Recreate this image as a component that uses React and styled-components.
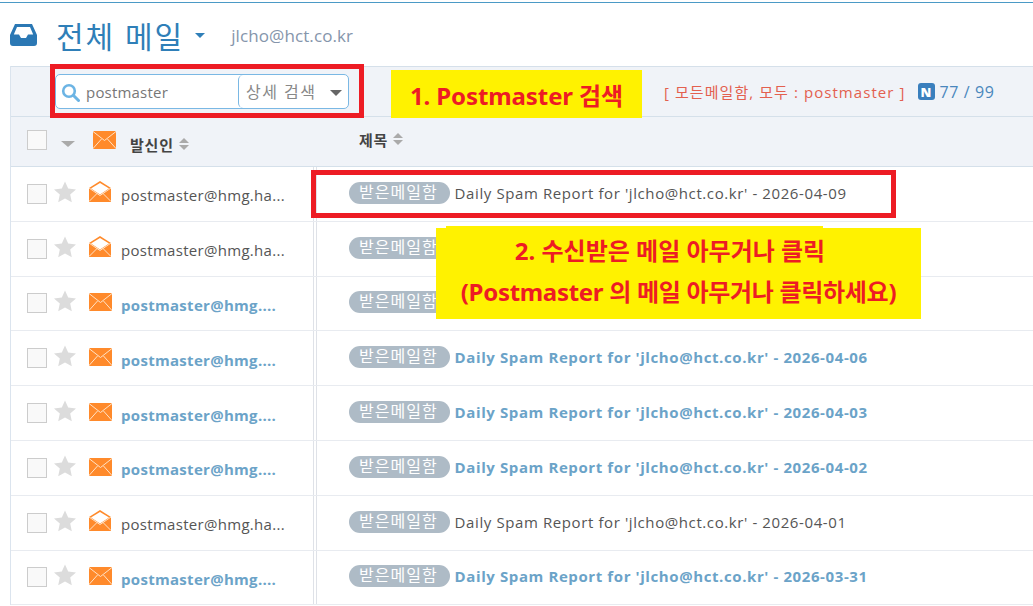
import React from 'react';
import styled, { createGlobalStyle } from 'styled-components';

const GlobalStyle = createGlobalStyle`
  html, body {
    margin: 0;
    padding: 0;
    background: #fff;
    overflow: hidden;
  }
  body {
    font-family: 'Open Sans', 'Noto Sans CJK KR', sans-serif;
  }
`;

const Page = styled.div`
  position: relative;
  width: 1033px;
  height: 606px;
  overflow: hidden;
  border-top: 1px solid #4b9ac6;
  margin-top: 2px;
  box-sizing: border-box;
`;

const TitleBar = styled.div`
  display: flex;
  align-items: center;
  height: 63px;
  padding-left: 10px;
  box-sizing: border-box;
`;

const Title = styled.h1`
  margin: 0 0 0 19px;
  font-size: 30px;
  font-weight: 400;
  letter-spacing: 2px;
  color: #2f7fb8;
`;

const TitleCaret = styled.span`
  width: 0;
  height: 0;
  margin: 1px 0 0 11px;
  border-left: 5px solid transparent;
  border-right: 5px solid transparent;
  border-top: 5px solid #2f7fb8;
`;

const Account = styled.span`
  margin: 2px 0 0 26px;
  font-size: 17px;
  letter-spacing: 0.1px;
  color: #8595ab;
`;

const Panel = styled.div`
  margin-left: 10px;
  border-left: 1px solid #dbe4ee;
`;

const Toolbar = styled.div`
  display: flex;
  align-items: center;
  height: 51px;
  padding-left: 44px;
  background: #f0f3f8;
  border-top: 1px solid #d5e0ea;
  border-bottom: 1px solid #d5e0ea;
  box-sizing: border-box;
`;

const SearchBox = styled.div`
  display: flex;
  align-items: center;
  width: 294px;
  height: 35px;
  background: #fff;
  border: 1px solid #7ab8e4;
  border-radius: 5px;
  box-sizing: border-box;
`;

const SearchInput = styled.div`
  display: flex;
  align-items: center;
  gap: 6px;
  width: 182px;
  padding: 1px 0 0 5px;
  box-sizing: border-box;
  font-size: 15px;
  letter-spacing: 0.2px;
  color: #777;
`;

const SearchMode = styled.div`
  display: flex;
  align-items: center;
  justify-content: space-between;
  flex: 1;
  align-self: stretch;
  padding: 0 6px 2px 7px;
  border-left: 1px solid #7ab8e4;
  border-radius: 5px;
  font-size: 16px;
  letter-spacing: 1.5px;
  color: #888;
`;

const ModeCaret = styled.span`
  width: 0;
  height: 0;
  margin-top: 4px;
  border-left: 6px solid transparent;
  border-right: 6px solid transparent;
  border-top: 6px solid #666;
`;

const SearchSummary = styled.div`
  margin-left: 315px;
  font-size: 15px;
  letter-spacing: 1.07px;
  color: #e3604f;
  white-space: nowrap;
`;

const Count = styled.div`
  display: flex;
  align-items: center;
  gap: 5px;
  margin-left: 12px;
  font-size: 16px;
  letter-spacing: 0.6px;
  color: #4a87bd;
  white-space: nowrap;
`;

const NaverBadge = styled.span`
  display: inline-flex;
  align-items: center;
  justify-content: center;
  width: 17px;
  height: 17px;
  border-radius: 3px;
  background: #3a7fbd;
  color: #fff;
  font-size: 13px;
  font-weight: 800;
  letter-spacing: 0;
`;

const HeaderRow = styled.div`
  display: flex;
  align-items: center;
  height: 50px;
  background: #f0f3f8;
  border-bottom: 1px solid #d5e0ea;
  box-sizing: border-box;
`;

const Check = styled.span`
  flex: none;
  width: 20px;
  height: 20px;
  margin: ${p => (p.$head ? '-4px' : '0')} 0 0 16px;
  background: #f9f9f9;
  border: 1px solid #ccc;
  box-sizing: border-box;
`;

const HeaderCaret = styled.span`
  width: 0;
  height: 0;
  margin: 4px 0 0 14px;
  border-left: 7px solid transparent;
  border-right: 7px solid transparent;
  border-top: 6px solid #aaa;
`;

const HeaderMail = styled.span`
  display: flex;
  margin: -4px 0 0 18px;
`;

const SenderHead = styled.span`
  display: flex;
  align-items: center;
  gap: 5px;
  width: 229px;
  margin: 5px 0 0 14px;
  font-size: 15px;
  font-weight: 700;
  letter-spacing: 0.8px;
  color: #444;
`;

const SubjectHead = styled(SenderHead)`
  width: auto;
  margin: -5px 0 0 0;
`;

const SortIcon = styled.span`
  display: inline-flex;
  flex-direction: column;
  gap: 2px;

  &::before,
  &::after {
    content: '';
    width: 0;
    height: 0;
    border-left: 5px solid transparent;
    border-right: 5px solid transparent;
  }
  &::before {
    border-bottom: 5px solid #aaa;
  }
  &::after {
    border-top: 5px solid #aaa;
  }
`;

const Row = styled.div`
  display: flex;
  height: 54.8px;
  border-bottom: 1px solid #e8ebf0;
  box-sizing: border-box;
`;

const SenderCell = styled.div`
  display: flex;
  align-items: center;
  flex: none;
  width: 303px;
  border-right: 1px solid #dfe2e8;
  box-sizing: border-box;
`;

const Star = styled.svg`
  flex: none;
  width: 24px;
  height: 24px;
  margin: -4px 0 0 6px;
  fill: #dcdcdc;
`;

const MailIcon = styled.span`
  display: flex;
  flex: none;
  margin: ${p => (p.$unread ? '-2px' : '-4px')} 0 0 12px;
`;

const Sender = styled.span`
  margin: 3px 0 0 ${p => (p.$unread ? '9px' : '10px')};
  font-size: 15px;
  font-weight: ${p => (p.$unread ? 700 : 400)};
  letter-spacing: 0.3px;
  color: ${p => (p.$unread ? '#6ba3c8' : '#555')};
  white-space: nowrap;
`;

const SubjectCell = styled.div`
  display: flex;
  align-items: center;
  flex: 1;
  margin-left: 2px;
  padding-left: 32px;
  border-left: 1px solid #dfe2e8;
`;

const Tag = styled.span`
  flex: none;
  padding: 0 12px 0 10px;
  height: 22px;
  line-height: 21px;
  margin-top: -2px;
  border-radius: 11px;
  background: #aebbc6;
  color: #fff;
  font-size: 16px;
  letter-spacing: 1px;
`;

const Subject = styled.span`
  margin: -2px 0 0 5px;
  font-size: 15px;
  font-weight: ${p => (p.$unread ? 700 : 400)};
  letter-spacing: 0.6px;
  color: ${p => (p.$unread ? '#6ba3c8' : '#555')};
  white-space: nowrap;
`;

const RedFrame = styled.div`
  position: absolute;
  left: ${p => p.$x}px;
  top: ${p => p.$y}px;
  width: ${p => p.$w}px;
  height: ${p => p.$h}px;
  border: 5px solid #ed1c24;
  box-sizing: border-box;
`;

const Note = styled.div`
  position: absolute;
  left: ${p => p.$x}px;
  top: ${p => p.$y}px;
  width: ${p => p.$w}px;
  height: ${p => p.$h}px;
  padding-top: ${p => p.$pad}px;
  box-sizing: border-box;
  background: #fff200;
  color: #ed1c24;
  font-family: 'Noto Sans', 'Noto Sans CJK KR', sans-serif;
  font-weight: 700;
  font-size: 24px;
  line-height: ${p => p.$line}px;
  text-align: center;
  white-space: nowrap;
`;

const NoteLine = styled.div`
  margin-right: ${p => p.$shift || 0}px;
  letter-spacing: ${p => p.$spacing || 0}px;
`;

const NoteCap = styled.div`
  position: absolute;
  left: 446px;
  top: 223px;
  width: 377px;
  height: 3px;
  background: #fff200;
`;

const EnvelopeClosed = () => (
  <svg width="23" height="18" viewBox="0 0 23 18">
    <rect width="23" height="18" rx="1" fill="#ff8a2b" />
    <path d="M0 0.5 L11.5 9.5 L23 0.5 M0 17.5 L8.5 8 M23 17.5 L14.5 8" stroke="#ffe2c6" strokeWidth="1" fill="none" />
  </svg>
);

const EnvelopeOpen = () => (
  <svg width="22" height="21" viewBox="0 0 22 21">
    <path d="M0 7 L11 0 L22 7 V21 H0 Z" fill="#ff8a2b" />
    <path d="M2 7.5 L11 2 L20 7.5 L11 13.5 Z" fill="#fff" />
    <path d="M0 20.5 L8.5 12 M22 20.5 L13.5 12 M0 7 L11 14.5 L22 7" stroke="#ffe2c6" strokeWidth="1" fill="none" />
  </svg>
);

// rows 2 and 3 have their subject covered by the yellow note
const rows = [
  { id: 1, unread: false, date: '2026-04-09' },
  { id: 2, unread: false },
  { id: 3, unread: true },
  { id: 4, unread: true, date: '2026-04-06' },
  { id: 5, unread: true, date: '2026-04-03' },
  { id: 6, unread: true, date: '2026-04-02' },
  { id: 7, unread: false, date: '2026-04-01' },
  { id: 8, unread: true, date: '2026-03-31' },
];

const App = () => (
  <>
    <GlobalStyle />
    <Page>
      <TitleBar>
        <svg width="27" height="22" viewBox="0 0 27 22">
          <path
            d="M5 0 H22 L27 11 V19 Q27 22 24 22 H3 Q0 22 0 19 V11 Z M7 3 L3.8 10.5 H9 L11 14 H16 L18 10.5 H23.2 L20 3 Z"
            fill="#2b78b4"
            fillRule="evenodd"
          />
        </svg>
        <Title>전체 메일</Title>
        <TitleCaret />
        <Account>jlcho@hct.co.kr</Account>
      </TitleBar>
      <Panel>
        <Toolbar>
          <SearchBox>
            <SearchInput>
              <svg width="19" height="19" viewBox="0 0 19 19">
                <circle cx="8" cy="8" r="5.8" fill="none" stroke="#6cb4e4" strokeWidth="2.6" />
                <path d="M12.5 12.5 L17.5 17.5" stroke="#6cb4e4" strokeWidth="3" strokeLinecap="round" />
              </svg>
              postmaster
            </SearchInput>
            <SearchMode>
              상세 검색
              <ModeCaret />
            </SearchMode>
          </SearchBox>
          <SearchSummary>[ 모든메일함, 모두 : postmaster ]</SearchSummary>
          <Count>
            <NaverBadge>N</NaverBadge>
            77 / 99
          </Count>
        </Toolbar>
        <HeaderRow>
          <Check $head />
          <HeaderCaret />
          <HeaderMail>
            <EnvelopeClosed />
          </HeaderMail>
          <SenderHead>
            발신인
            <SortIcon />
          </SenderHead>
          <SubjectHead>
            제목
            <SortIcon />
          </SubjectHead>
        </HeaderRow>
        {rows.map(row => (
          <Row key={row.id}>
            <SenderCell>
              <Check />
              <Star viewBox="0 0 24 24">
                <path d="M12 1.5 L15.2 8.6 L23 9.4 L17.2 14.6 L18.8 22.3 L12 18.4 L5.2 22.3 L6.8 14.6 L1 9.4 L8.8 8.6 Z" />
              </Star>
              <MailIcon $unread={row.unread}>{row.unread ? <EnvelopeClosed /> : <EnvelopeOpen />}</MailIcon>
              <Sender $unread={row.unread}>{row.unread ? 'postmaster@hmg....' : 'postmaster@hmg.ha...'}</Sender>
            </SenderCell>
            <SubjectCell>
              <Tag>받은메일함</Tag>
              {row.date && (
                <Subject $unread={row.unread}>Daily Spam Report for 'jlcho@hct.co.kr' - {row.date}</Subject>
              )}
            </SubjectCell>
          </Row>
        ))}
      </Panel>
      <RedFrame $x={50} $y={61} $w={314} $h={54} />
      <Note $x={391} $y={67} $w={251} $h={48} $line={52} $pad={0}>
        <NoteLine $spacing={-0.1}>1. Postmaster 검색</NoteLine>
      </Note>
      <RedFrame $x={311} $y={167} $w={585} $h={48} />
      <NoteCap />
      <Note $x={436} $y={225} $w={485} $h={91} $line={41} $pad={2}>
        <NoteLine $shift={17}>2. 수신받은 메일 아무거나 클릭</NoteLine>
        <NoteLine $spacing={-0.3}>(Postmaster 의 메일 아무거나 클릭하세요)</NoteLine>
      </Note>
    </Page>
  </>
);

export default App;
